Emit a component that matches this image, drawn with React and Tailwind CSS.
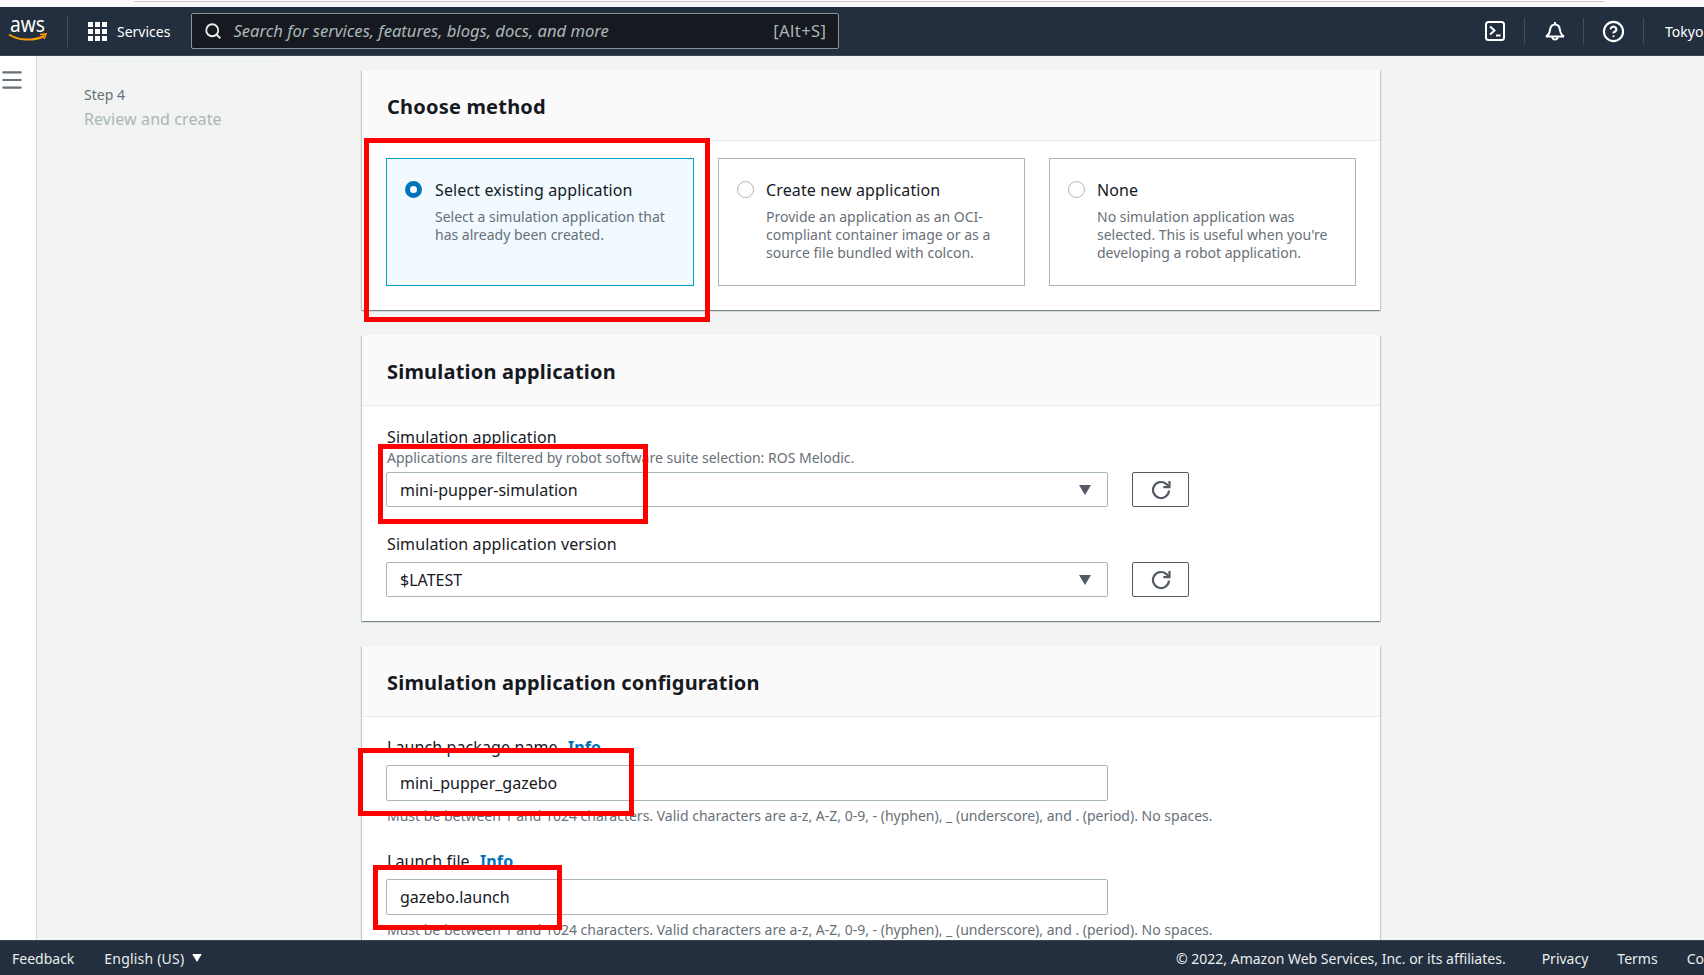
import React from 'react';
import { Menu, Search, CircleHelp } from 'lucide-react';

const methods = [
  {
    title: 'Select existing application',
    desc: ['Select a simulation application that', 'has already been created.'],
    selected: true,
  },
  {
    title: 'Create new application',
    desc: ['Provide an application as an OCI-', 'compliant container image or as a', 'source file bundled with colcon.'],
  },
  {
    title: 'None',
    desc: ['No simulation application was', "selected. This is useful when you're", 'developing a robot application.'],
  },
];

const RedBox = ({ className }) => (
  <div className={`absolute border-[5px] border-[#ff0000] pointer-events-none ${className}`} />
);

const Caret = ({ className }) => (
  <svg viewBox="0 0 12 10" className={className}>
    <path d="M0 0h12L6 10z" fill="currentColor" />
  </svg>
);

const RefreshIcon = () => (
  <svg viewBox="0 0 20 20" className="w-[20px] h-[20px]" fill="none" stroke="currentColor" strokeWidth="2.2">
    <path d="M18 10.5a8 8 0 1 1-2.6-6.4L18 6.5" />
    <path d="M18.5 1v6.2h-6.2" />
  </svg>
);

const TerminalIcon = () => (
  <svg viewBox="0 0 20 20" className="w-[20px] h-[20px]" fill="none" stroke="currentColor" strokeWidth="2">
    <rect x="1" y="1" width="18" height="18" rx="2.5" />
    <path d="M5 5.5l4.5 4-4.5 4" />
    <path d="M11 14.5h4.5" />
  </svg>
);

const BellIcon = () => (
  <svg viewBox="0 0 20 20" className="w-[20px] h-[20px] ml-[2px]" fill="none" stroke="currentColor" strokeWidth="2">
    <path d="M10 1v2" />
    <path d="M1 15.5c2.8-1.5 3.6-3.5 4-6.5.4-3.4 2.4-5.6 5-5.6s4.6 2.2 5 5.6c.4 3 1.2 5 4 6.5z" />
    <path d="M7.2 15.8a2.8 2.8 0 1 0 5.6 0" />
  </svg>
);

const Panel = ({ title, children, className = '' }) => (
  <section className={`w-[1018px] bg-white shadow-[0_1px_1px_0_rgba(0,28,36,0.3),1px_1px_1px_0_rgba(0,28,36,0.15),-1px_1px_1px_0_rgba(0,28,36,0.15)] ${className}`}>
    <div className="h-[71px] flex items-center pt-[3px] px-[25px] bg-[#fafafa] border-b border-[#eaeded]">
      <h2 className="text-[20px] font-bold text-[#16191f] tracking-[0.2px]">{title}</h2>
    </div>
    {children}
  </section>
);

const SelectRow = ({ value }) => (
  <div className="flex gap-6">
    <div className="w-[722px] h-[35px] flex items-center justify-between pl-[13px] pr-[16px] border border-[#aab7b8] rounded-[2px] bg-white text-[16px] text-[#16191f]">
      <span>{value}</span>
      <Caret className="w-[12px] h-[10px] text-[#545b64]" />
    </div>
    <button className="w-[57px] h-[35px] flex items-center justify-center border border-[#545b64] rounded-[2px] bg-white text-[#545b64]">
      <RefreshIcon />
    </button>
  </div>
);

const TextField = ({ label, value }) => (
  <div>
    <div className="pl-px text-[16px] leading-[22px] tracking-[0.1px] text-[#16191f]">
      {label} <a className="ml-[6px] font-bold text-[#0073bb]">Info</a>
    </div>
    <div className="mt-[7px] w-[722px] h-[36px] flex items-center pl-[13px] border border-[#aab7b8] rounded-[2px] bg-white text-[16px] text-[#16191f]">
      {value}
    </div>
    <div className="mt-[5px] pl-px text-[14px] leading-[20px] text-[#687078]">
      Must be between 1 and 1024 characters. Valid characters are a-z, A-Z, 0-9, - (hyphen), _ (underscore), and . (period). No spaces.
    </div>
  </div>
);

export default function App() {
  return (
    <div className="relative h-[975px] overflow-hidden flex flex-col bg-[#f2f3f3] font-['Noto_Sans',sans-serif]">
      {/* browser chrome left over at the top of the capture */}
      <div className="h-[7px] bg-[#f9f9f9] relative shrink-0">
        <div className="absolute left-[134px] right-[100px] top-0 h-[2px] bg-white border-b border-[#c4c4c4]" />
      </div>

      <header className="relative z-10 h-[48px] shrink-0 flex items-center bg-[#232f3e] text-white shadow-[0_1px_0_#3b4654]">
        <div className="w-[68px] h-[32px] flex items-center pl-[9px] border-r border-[#414d5c]">
          <svg viewBox="0 0 38 24" className="w-[38px] h-[24px] overflow-visible">
            <text x="1" y="13" fontSize="22" fill="#fff" fontFamily="Noto Sans, sans-serif" textLength="35" lengthAdjust="spacingAndGlyphs">aws</text>
            <path d="M0 15.5c9 6 25 7 35 1.5" fill="none" stroke="#ff9900" strokeWidth="2" />
            <path d="M31 15.5l6-.5-2 5" fill="none" stroke="#ff9900" strokeWidth="1.6" />
          </svg>
        </div>
        <div className="ml-[20px] grid grid-cols-3 gap-[2px] w-[19px]">
          {Array.from({ length: 9 }).map((_, i) => (
            <span key={i} className="w-[5px] h-[5px] bg-white" />
          ))}
        </div>
        <span className="ml-[10px] text-[14px]">Services</span>
        <div className="ml-[21px] w-[648px] h-[36px] flex items-center justify-between pl-[12px] pr-[12px] rounded-[2px] border border-[#879596] bg-[#16191f] text-[#aab7b8]">
          <div className="flex items-center gap-[11px]">
            <Search size={18} strokeWidth={2.4} className="text-[#eaeded]" />
            <span className="italic text-[16.6px]">Search for services, features, blogs, docs, and more</span>
          </div>
          <span className="text-[16.6px] tracking-[0.4px]">[Alt+S]</span>
        </div>
        <div className="ml-auto flex items-center">
          <div className="w-[59px] h-[26px] flex items-center justify-center border-r border-[#414d5c]">
            <TerminalIcon />
          </div>
          <div className="w-[59px] h-[26px] flex items-center justify-center border-r border-[#414d5c]">
            <BellIcon />
          </div>
          <div className="w-[60px] h-[26px] flex items-center justify-center border-r border-[#414d5c]">
            <CircleHelp size={23} strokeWidth={2.2} />
          </div>
          <span className="ml-[21px] w-[39px] overflow-hidden text-[14px]">Tokyo</span>
        </div>
      </header>

      <div className="flex-1 flex min-h-0 overflow-hidden">
        <aside className="w-[37px] shrink-0 bg-white border-r border-[#d5dbdb] pt-[12px] text-[#687078]">
          <Menu size={26} strokeWidth={2} className="-ml-[1px]" />
        </aside>
        <nav className="w-[325px] shrink-0 pl-[47px]">
          <div className="w-[195px] border-t border-[#eaeded] mt-[6px]" />
          <div className="mt-[23px] text-[14px] leading-[20px] text-[#687078]">Step 4</div>
          <div className="mt-[3px] text-[16px] leading-[22px] tracking-[0.1px] text-[#aab7b8]">Review and create</div>
        </nav>
        <main className="flex-1 pt-[15px] flex flex-col gap-[25px]">
          <Panel title="Choose method">
            <div className="flex gap-6 pl-6 pr-6 pt-[17px] pb-6">
              {methods.map((m) => (
                <div
                  key={m.title}
                  className={`h-[128px] flex pt-[21px] pl-[18px] border ${
                    m.selected
                      ? 'w-[308px] gap-[13px] border-[#00a1c9] bg-[#f1faff]'
                      : 'w-[307px] gap-[12px] border-[#aab7b8] bg-white'
                  }`}
                >
                  {m.selected ? (
                    <span className="mt-[1px] w-[17px] h-[17px] rounded-full border-[5px] border-[#0073bb] bg-white shrink-0" />
                  ) : (
                    <span className="mt-[1px] w-[17px] h-[17px] rounded-full border border-[#aab7b8] bg-white shrink-0" />
                  )}
                  <div>
                    <div className="text-[16px] leading-[20px] tracking-[0.12px] text-[#16191f]">{m.title}</div>
                    <div className="mt-[8px] text-[14px] leading-[18px] text-[#687078]">
                      {m.desc.map((line) => (
                        <div key={line}>{line}</div>
                      ))}
                    </div>
                  </div>
                </div>
              ))}
            </div>
          </Panel>

          <Panel title="Simulation application" className="h-[286px]">
            <div className="pl-6 pr-6 pt-[20px]">
              <div className="pl-px text-[16px] leading-[22px] tracking-[0.1px] text-[#16191f]">Simulation application</div>
              <div className="pl-px text-[14px] leading-[20px] text-[#687078]">
                Applications are filtered by robot software suite selection: ROS Melodic.
              </div>
              <div className="mt-[4px]">
                <SelectRow value="mini-pupper-simulation" />
              </div>
              <div className="mt-[26px] pl-px text-[16px] leading-[22px] tracking-[0.1px] text-[#16191f]">Simulation application version</div>
              <div className="mt-[7px]">
                <SelectRow value="$LATEST" />
              </div>
            </div>
          </Panel>

          <Panel title="Simulation application configuration">
            <div className="pl-6 pr-6 pt-[19px] flex flex-col gap-[24px]">
              <TextField label="Launch package name" value="mini_pupper_gazebo" />
              <TextField label="Launch file" value="gazebo.launch" />
            </div>
          </Panel>
        </main>
      </div>

      <footer className="h-[35px] shrink-0 flex items-center justify-between bg-[#232f3e] text-[14px] text-[#eaeded] border-t border-[#3b4654]">
        <div className="flex items-center pl-[12px]">
          <span>Feedback</span>
          <span className="ml-[30px] tracking-[0.2px]">English (US)</span>
          <Caret className="ml-[8px] w-[10px] h-[8px] text-white" />
        </div>
        <div className="flex items-center gap-[29px] w-[528px] overflow-hidden whitespace-nowrap shrink-0">
          <span>© 2022, Amazon Web Services, Inc. or its affiliates.</span>
          <span className="ml-[7px]">Privacy</span>
          <span>Terms</span>
          <span>Cookie preferences</span>
        </div>
      </footer>

      <RedBox className="left-[364px] top-[138px] w-[346px] h-[184px]" />
      <RedBox className="left-[378px] top-[444px] w-[270px] h-[80px]" />
      <RedBox className="left-[358px] top-[748px] w-[276px] h-[68px]" />
      <RedBox className="left-[373px] top-[865px] w-[189px] h-[65px]" />
    </div>
  );
}
